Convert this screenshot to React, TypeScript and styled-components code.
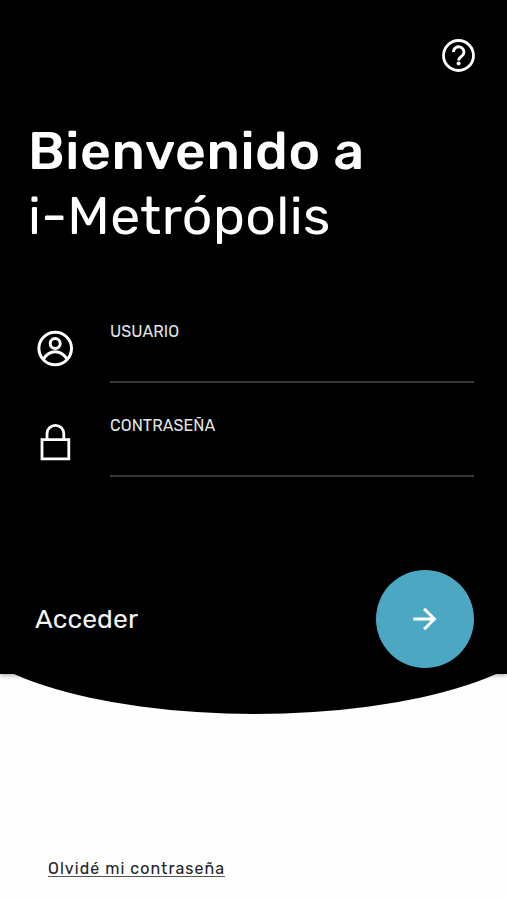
import React from "react";
import styled, { createGlobalStyle } from "styled-components";

const GlobalStyle = createGlobalStyle`
  * { box-sizing: border-box; }
  body { margin: 0; background: #fff; }
`;

const Screen = styled.main`
  width: 507px;
  height: 900px;
  overflow: hidden;
  display: flex;
  flex-direction: column;
  background: #fefefe;
  font-family: Rubik, Roboto, "Liberation Sans", sans-serif;
`;

const Panel = styled.section`
  position: relative;
  height: 674px;
  flex: none;
  display: flex;
  flex-direction: column;
  background: #000;
  color: #fff;
  box-shadow: 0 1px 5px rgba(0, 0, 0, 0.4);

  &::after {
    content: "";
    position: absolute;
    left: -44px;
    bottom: -40px;
    width: 598px;
    height: 196px;
    border-radius: 50%;
    background: #000;
  }
`;

const TopBar = styled.header`
  display: flex;
  justify-content: flex-end;
  padding: 38px 30px 0 0;
  height: 119px;
`;

const IconButton = styled.button`
  width: 36px;
  height: 36px;
  padding: 0;
  border: 0;
  background: none;
  color: inherit;
`;

const Icon = styled.svg`
  display: block;
  fill: none;
  stroke: currentColor;
`;

const Title = styled.h1`
  margin: 0;
  padding-left: 28px;
  height: 197px;
  font-size: 53.5px;
  line-height: 64.5px;
  font-weight: 400;
  white-space: nowrap;
`;

const TitleLine = styled.span<{ $bold?: boolean }>`
  display: block;
  font-weight: ${(p) => (p.$bold ? 500 : 400)};
  letter-spacing: ${(p) => (p.$bold ? "0.6px" : "0.4px")};
`;

const Field = styled.label`
  display: flex;
  height: 94px;
  padding: 0 33px 0 36px;
`;

const FieldIcon = styled.span`
  width: 74px;
  padding-top: 13px;
`;

const FieldBody = styled.span`
  flex: 1;
  height: 67px;
  display: flex;
  flex-direction: column;
  border-bottom: 2px solid #373737;
`;

const FieldName = styled.span`
  padding-top: 6px;
  font-size: 16px;
  line-height: 20px;
  letter-spacing: 0.08px;
  color: #e4e4e4;
`;

const Input = styled.input`
  width: 100%;
  height: 38px;
  padding: 0;
  border: 0;
  outline: 0;
  background: transparent;
  color: #fff;
  font: inherit;
`;

const AccessRow = styled.div`
  position: relative;
  z-index: 1;
  display: flex;
  align-items: center;
  justify-content: space-between;
  margin-top: 66px;
  padding: 0 33px 0 35px;
`;

const AccessText = styled.span`
  font-size: 26.5px;
  line-height: 32px;
  letter-spacing: 0.1px;
  color: #f4f4f4;
`;

const AccessButton = styled.button`
  display: grid;
  place-items: center;
  width: 98px;
  height: 98px;
  padding: 0;
  border: 0;
  border-radius: 50%;
  background: #4ca8c2;
  color: #fff;
`;

const Footer = styled.footer`
  flex: 1;
  display: flex;
  align-items: flex-end;
  padding: 0 0 23px 48px;
`;

const ForgotLink = styled.a`
  height: 17px;
  border-bottom: 1.5px solid #555;
  color: #222;
  font-size: 16px;
  line-height: 17px;
  letter-spacing: 1.05px;
  text-decoration: none;
  white-space: nowrap;
`;

const HelpIcon = () => (
  <Icon width="36" height="36" viewBox="0 0 36 36" strokeWidth="2.8">
    <circle cx="17.5" cy="17.5" r="15" />
    <path d="M12.5 14.1a5.2 5.2 0 1 1 8.7 3.7c-2.1 1.5-3.5 2.2-3.5 4.6" />
    <circle cx="17.6" cy="25.5" r="2" fill="currentColor" stroke="none" />
  </Icon>
);

const UserIcon = () => (
  <Icon width="38" height="40" viewBox="0 0 38 40" strokeWidth="3">
    <circle cx="19.2" cy="19.5" r="16.3" />
    <circle cx="19.2" cy="14.5" r="5" />
    <path d="M7.2 30.3C10 26 14.2 22.8 19.2 22.8S28.4 26 31.2 30.3" />
  </Icon>
);

const LockIcon = () => (
  <Icon width="38" height="40" viewBox="0 0 38 40" strokeWidth="2.8">
    <path d="M6 16.7H32.8V35.9H6Z" />
    <path d="M11 16.5V10.7a8.4 8.4 0 0 1 16.8 0V16.5" />
  </Icon>
);

const ArrowIcon = () => (
  <Icon width="28" height="28" viewBox="0 0 28 28" strokeWidth="3">
    <path d="M2.3 14H24M13.1 3.8L23.4 14L13.1 24.2" />
  </Icon>
);

export default function App() {
  return (
    <>
      <GlobalStyle />
      <Screen>
        <Panel>
          <TopBar>
            <IconButton aria-label="Ayuda"><HelpIcon /></IconButton>
          </TopBar>
          <Title>
            <TitleLine $bold>Bienvenido a</TitleLine>
            <TitleLine>i-Metrópolis</TitleLine>
          </Title>
          <Field>
            <FieldIcon><UserIcon /></FieldIcon>
            <FieldBody>
              <FieldName>USUARIO</FieldName>
              <Input type="text" />
            </FieldBody>
          </Field>
          <Field>
            <FieldIcon><LockIcon /></FieldIcon>
            <FieldBody>
              <FieldName>CONTRASEÑA</FieldName>
              <Input type="password" />
            </FieldBody>
          </Field>
          <AccessRow>
            <AccessText>Acceder</AccessText>
            <AccessButton aria-label="Acceder"><ArrowIcon /></AccessButton>
          </AccessRow>
        </Panel>
        <Footer>
          <ForgotLink>Olvidé mi contraseña</ForgotLink>
        </Footer>
      </Screen>
    </>
  );
}
